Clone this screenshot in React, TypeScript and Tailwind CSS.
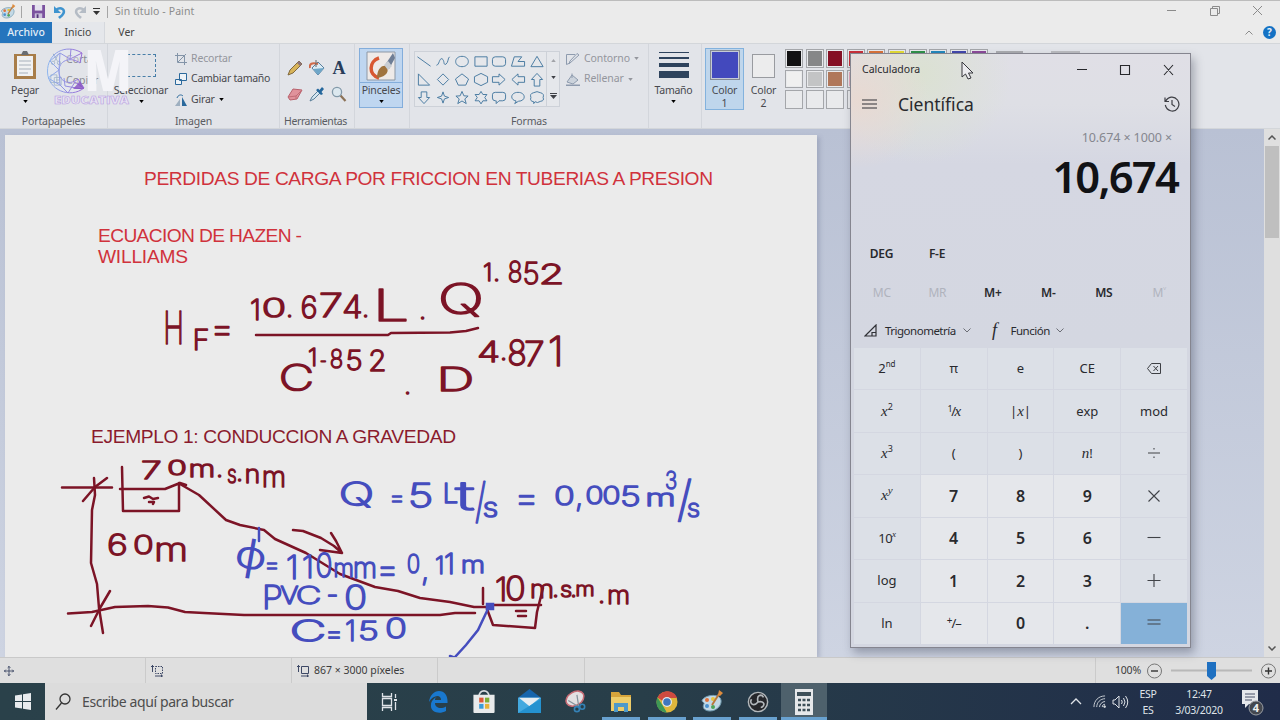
import type { ReactNode } from 'react';
import { clsx } from 'clsx';

const PALETTE = [
  ['#111113', '#868788', '#850f24', '#c8303a', '#d9733a', '#e3dc35', '#2f9149', '#2388bd', '#4247ac', '#8b4a99'],
  ['#f0f0f0', '#c3c4c5', '#b0775a', '#e3a9bb', '#eac147', '#e6dfae', '#b0d548', '#98cfdf', '#6d8fb6', '#bcb4d6'],
  ['', '', '', '', '', '', '', '', '', ''],
];

const SHAPES = [
  'M1 3 L15 13',
  'M1 12 C4 12 4 4 7 5 C10 7 8 12 11 11 C14 9 13 4 15 3',
  'M8 2.5 C17 2.5 17 13.5 8 13.5 C-1 13.5 -1 2.5 8 2.5Z',
  'M1.5 3 H14.5 V13 H1.5Z',
  'M4 3 H12 Q15 3 15 6 V10 Q15 13 12 13 H4 Q1 13 1 10 V6 Q1 3 4 3Z',
  'M1 13 L4 3 H12 L8 8 H15 V13Z',
  'M8 2.5 L14.5 13.5 H1.5Z',
  'M2 2 V14 H14Z',
  'M8 2 L14 8 L8 14 L2 8Z',
  'M8 2 L15 7.5 L12 14 H4 L1 7.5Z',
  'M8 1.5 L15 5 V11 L8 14.5 L1 11 V5Z',
  'M1 5 H8 V2 L14.5 8 L8 14 V11 H1Z',
  'M15 5 H8 V2 L1.5 8 L8 14 V11 H15Z',
  'M5 15 V8 H2 L8 1.5 L14 8 H11 V15Z',
  'M5 2 V8 H2 L8 14.5 L14 8 H11 V2Z',
  'M8 2 L9.5 6.5 L14 8 L9.5 9.5 L8 14 L6.5 9.5 L2 8 L6.5 6.5Z',
  'M8 1.5 L10 6.2 L14.5 6.5 L11 9.5 L12.5 14.5 L8 11.7 L3.5 14.5 L5 9.5 L1.5 6.5 L6 6.2Z',
  'M8 1.5 L10 4.8 L14.3 4.8 L12 8 L14.3 11.5 L10 11.5 L8 14.8 L6 11.5 L1.7 11.5 L4 8 L1.7 4.8 L6 4.8Z',
  'M4 2.5 H12 Q15 2.5 15 5 V8.5 Q15 11.5 12 11.5 H8 L5 14.5 V11.5 H4 Q1 11.5 1 8.5 V5 Q1 2.5 4 2.5Z',
  'M6 11.7 C-1 10.5 0 2.5 8 2.5 C16.5 2.5 17 11.8 8.5 12 L4.5 14.5Z',
  'M4 3 Q8 0.5 12 3 Q16 4 14.5 8 Q16 11.5 12 12 Q8 14.5 6 12.5 L4.5 14.5 L4.5 12.5 Q0 12 1.5 8 Q0 4 4 3Z',
];

/** Character plus the box of its ink: left, top, right, bottom. */
type Mark = [string, number, number, number, number];

const RED_NOTES: Mark[][] = [
  [['H', 165, 311, 182, 344], ['F', 194, 329, 208, 350], ['=', 213, 323, 231, 333]],
  [
    ['1', 251, 299, 256, 320], ['0', 264, 298, 284, 317], ['.', 288, 312, 292, 317], ['6', 302, 296, 316, 318],
    ['7', 321, 293, 341, 317], ['4', 344, 295, 361, 318], ['.', 364, 312, 368, 317], ['L', 376, 289, 406, 321],
  ],
  [['.', 421, 313, 426, 319], ['Q', 442, 283, 480, 314]],
  [['1', 484, 263, 490, 281], ['.', 495, 277, 499, 281], ['8', 509, 261, 521, 282], ['5', 524, 262, 538, 284], ['2', 541, 264, 562, 284]],
  [['C', 282, 364, 311, 390]],
  [['1', 309, 348, 318, 366], ['-', 321, 360, 326, 363], ['8', 331, 349, 342, 368], ['5', 347, 350, 361, 370], ['2', 370, 350, 385, 371]],
  [['.', 406, 389, 410, 394], ['D', 440, 367, 471, 391]],
  [['4', 479, 341, 498, 362], ['.', 502, 355, 506, 360], ['8', 509, 340, 525, 365], ['7', 526, 341, 543, 366], ['1', 549, 336, 560, 366]],
  [
    ['7', 143, 461, 160, 479], ['0', 169, 460, 185, 475], ['m', 191, 464, 213, 477], ['.', 218, 473, 222, 477], ['s', 228, 469, 236, 483],
    ['.', 238, 477, 242, 481], ['n', 246, 469, 259, 483], ['m', 264, 471, 284, 487],
  ],
  [['6', 109, 534, 126, 555], ['0', 135, 535, 152, 554], ['m', 157, 543, 185, 561]],
  [
    ['1', 496, 577, 504, 601], ['0', 507, 576, 524, 600], ['m', 532, 584, 552, 598], ['.', 554, 593, 558, 597], ['s', 561, 585, 571, 597],
    ['.', 572, 594, 575, 597], ['m', 577, 585, 593, 596], ['.', 600, 599, 605, 603], ['m', 609, 590, 628, 604],
  ],
];

const BLUE_NOTES: Mark[][] = [
  [['Q', 342, 482, 371, 505], ['=', 391, 492, 403, 502], ['5', 410, 483, 431, 507]],
  [['L', 444, 483, 457, 503], ['t', 457, 481, 473, 510], ['/', 475, 478, 486, 522], ['s', 484, 502, 497, 517]],
  [['=', 517, 491, 536, 503]],
  [['0', 556, 486, 573, 505], [',', 576, 500, 579, 510], ['0', 587, 486, 602, 504], ['0', 604, 486, 619, 504], ['5', 622, 486, 639, 506]],
  [['m', 648, 493, 673, 506], ['3', 666, 471, 676, 489]],
  [['/', 677, 475, 692, 520], ['s', 688, 503, 699, 517]],
  [['=', 266, 561, 278, 568]],
  [['1', 287, 555, 299, 579], ['1', 303, 555, 310, 578], ['0', 317, 553, 331, 577], ['m', 335, 563, 352, 577], ['m', 355, 562, 375, 578], ['=', 379, 564, 396, 573]],
  [['0', 408, 554, 419, 573], [',', 422, 574, 426, 584], ['1', 436, 556, 441, 574], ['1', 445, 553, 451, 574], ['m', 463, 560, 483, 573]],
  [['P', 264, 585, 281, 609], ['V', 282, 586, 297, 604], ['C', 298, 586, 319, 604], ['-', 328, 594, 337, 597], ['0', 346, 585, 365, 609]],
  [['C', 293, 620, 323, 641], ['=', 327, 628, 341, 637], ['1', 346, 620, 352, 641], ['5', 360, 621, 377, 640], ['0', 387, 618, 405, 638]],
];

const X_HEIGHT = 0.55;
const CAP_HEIGHT = 0.73;

/** Turns an ink box into the attributes that stretch the glyph over it. */
function fitMark([ch, left, top, right, bottom]: Mark) {
  const w = right - left;
  const h = bottom - top;
  if (ch === '.') return { x: left - 2, y: bottom, fontSize: 26 };
  if (ch === ',') return { x: left - 1, y: bottom - 4, fontSize: 30 };
  if (ch === '=') {
    const size = w / 0.5;
    return { x: left - size * 0.07, y: (top + bottom) / 2 + size * 0.36, fontSize: size };
  }
  if (ch === '-') {
    const size = w / 0.34;
    return { x: left - size * 0.06, y: (top + bottom) / 2 + size * 0.33, fontSize: size };
  }
  if (ch === '1') return { x: left - 1, y: bottom, fontSize: h / CAP_HEIGHT };
  if (ch === '/') return { x: left, y: bottom - h * 0.1, fontSize: h / 0.92, textLength: w };
  const lower = ch === 'm' || ch === 'n' || ch === 's';
  const length = w / 0.82;
  return {
    x: left - length * 0.09,
    y: bottom,
    fontSize: h / (lower ? X_HEIGHT : CAP_HEIGHT),
    textLength: length,
  };
}

function Notes({ notes, color }: { notes: Mark[][]; color: string }) {
  return (
    <g fill={color} stroke={color} strokeWidth="1.500" strokeLinejoin="round" fontWeight="200">
      {notes.map((word, i) => (
        <text key={i}>
          {word.map((mark, j) => (
            <tspan key={j} lengthAdjust="spacingAndGlyphs" {...fitMark(mark)}>
              {mark[0]}
            </tspan>
          ))}
        </text>
      ))}
    </g>
  );
}

function Canvas() {
  return (
    <svg viewBox="5 135 812 522" className="block h-[522px] w-[812px]" fontFamily="'Liberation Sans', Arial, sans-serif">
      <g fill="#d0323c" fontSize="19.2">
        <text x="144" y="185" textLength="569" lengthAdjust="spacing">PERDIDAS DE CARGA POR FRICCION EN TUBERIAS A PRESION</text>
        <text x="98" y="242" textLength="204" lengthAdjust="spacing">ECUACION DE HAZEN -</text>
        <text x="98" y="263" textLength="90" lengthAdjust="spacing">WILLIAMS</text>
      </g>
      <text x="91" y="443" fontSize="19.2" fill="#8a1b2d" textLength="365" lengthAdjust="spacing">EJEMPLO 1: CONDUCCION A GRAVEDAD</text>

      {/* fraction bar, tanks, pipe and dimension lines */}
      <g fill="none" stroke="#7c1426" strokeWidth="2.5" strokeLinecap="round" strokeLinejoin="round">
        <path d="M256 335 H388 L391 333 L450 332.5 L466 331 L478 328" />
        <path d="M62 487.5 H112 M94 478 L95 495 L92 510 L91 563 L97 584 L99 608 L103 633" />
        <path d="M83 501 L95 487 L107 478 M91 626 L100 608 L110 591" />
        <path d="M68 613.5 L92 612 L115 607 L148 606 L168 607.5 L185 612 L204 613 L244 615 H440 L455 613 H475" />
        <path d="M122 467 L123 511 H179 V483 M120 489 H165 L180 483 L186 485" />
        <path d="M144 498 L149 496.500 L153 499 L158 498 M149 502 L154 502 L153 504" />
        <path d="M180 484 L199 495 L226 520 L240 525 L264 530 L275 539 L306 553 L340 574 L375 587 L398 591 L420 598 L450 602 L474 607 H488" />
        <path d="M293 530 L303 531 L321 538 L334 546 L342 553 M331 533 L336 541 L342 553 L320 550" />
        <path d="M483 588 V604 M492 605 H541 M487 609 L493 625 L535 628 L537 612 L543 588 M516 611 H526 M518 616 H526" />
      </g>
      <g fill="none" stroke="#454dbe" strokeWidth="2.5" strokeLinecap="round">
        <path d="M259 528 V541 M487 611 L478 630 L466 645 L455 657 M450 656 L453 657" />
        <rect x="487" y="604" width="6" height="5" fill="#454dbe" />
      </g>

      <g fontFamily="Inter, 'Noto Sans', sans-serif">
        <Notes notes={RED_NOTES} color="#7c1426" />
        <Notes notes={BLUE_NOTES} color="#454dbe" />
      </g>
      <text x="235" y="569" fontSize="40" fill="#454dbe" textLength="32" lengthAdjust="spacingAndGlyphs" transform="rotate(10 251 556)" fontFamily="'Noto Sans', 'DejaVu Sans', sans-serif">ϕ</text>
    </svg>
  );
}

function Caret({ className }: { className?: string }) {
  return (
    <svg viewBox="0 0 6 4" className={clsx('h-[3px] w-[5px] shrink-0', className)} fill="currentColor">
      <path d="M0 0H6L3 4Z" />
    </svg>
  );
}

function Group({ label, className, children }: { label?: string; className: string; children?: ReactNode }) {
  return (
    <div className={clsx('flex shrink-0 flex-col border-r border-[#d3d6dc] pt-1', className)}>
      <div className="flex h-[67px]">{children}</div>
      <div className="text-center text-[10.5px] leading-[13px] tracking-[-0.150px] text-[#5a5c62]">{label}</div>
    </div>
  );
}

function PaintIcon({ className }: { className?: string }) {
  return (
    <svg viewBox="0 0 24 24" className={className}>
      <path d="M3 9C8 4 20 4 21 10C22 15 17 21 10 21C4 21 2 17 4 14C5 12 0 12 3 9Z" fill="#c3d9e6" stroke="#6f98ad" />
      <circle cx="7" cy="10" r="2" fill="#e0713a" />
      <circle cx="13" cy="9" r="2" fill="#e6c33f" />
      <circle cx="7" cy="16" r="2" fill="#4b92cf" />
      <circle cx="13" cy="17" r="2" fill="#4fa55a" />
      <path d="M12 15L19 4" stroke="#b9793d" strokeWidth="2" />
      <path d="M18 5L19 0L23 3L20 6Z" fill="#dd8b3d" />
    </svg>
  );
}

function TitleBar() {
  return (
    <header className="flex h-[22px] shrink-0 items-center border-t border-[#bcbcbc] bg-[#ebebeb]">
      <PaintIcon className="h-4 w-4" />
      <span className="ml-[5px] h-3 w-px bg-[#a5a5a5]" />
      <svg viewBox="0 0 14 14" className="ml-[10px] h-[13px] w-[13px]">
        <path d="M0 0H14V14H0Z" fill="#7b529f" />
        <path d="M3 0H11V6H3Z" fill="#e4e1ee" />
        <path d="M3 9H11V14H3Z" fill="#c9bfdb" />
        <path d="M5 10H7V14H5Z" fill="#54357a" />
      </svg>
      <svg viewBox="0 0 14 14" className="ml-2 h-[14px] w-[14px]">
        <path d="M3 5C8 1 13 5 10 9C9 11 7 12 6 13" fill="none" stroke="#3f94cf" strokeWidth="2.600" />
        <path d="M1 1V8H8Z" fill="#3f94cf" />
      </svg>
      <svg viewBox="0 0 14 14" className="ml-[6px] h-[14px] w-[14px]">
        <path d="M11 5C6 1 1 5 4 9C5 11 7 12 8 13" fill="none" stroke="#b5bcc5" strokeWidth="2.600" />
        <path d="M13 1V8H6Z" fill="#b5bcc5" />
      </svg>
      <svg viewBox="0 0 7 7" className="ml-[6px] h-[7px] w-[7px]" fill="#333">
        <path d="M0 0H7V1H0ZM0 3H7L3.500 7Z" />
      </svg>
      <span className="ml-[7px] h-3 w-px bg-[#a5a5a5]" />
      <span className="ml-[7px] text-[10.5px] tracking-[0.1px] text-[#8c8c8c]">Sin título - Paint</span>
      <svg viewBox="0 0 96 12" className="mr-[17px] ml-auto h-3 w-[96px]" fill="none" stroke="#8b8b8b">
        <path d="M0 4.500H9 M43.500 2.500H50.500V9.500H43.500ZM45.500 2V0.500H52.500V7.500H51 M86 0L95 9M95 0L86 9" />
      </svg>
    </header>
  );
}

function TabRow() {
  return (
    <nav className="flex h-[21px] shrink-0 items-center bg-[#ebebeb] text-[10.5px] text-[#444]">
      <span className="flex h-full w-[52px] items-center justify-center bg-[#2575bd] font-medium text-[#e3edf6]">Archivo</span>
      <span className="flex h-full w-[53px] items-center justify-center border-r border-[#d5d8dd] bg-[#e5e7eb]">Inicio</span>
      <span className="flex w-[43px] items-center justify-center">Ver</span>
      <svg viewBox="0 0 8 5" className="mr-[10px] ml-auto h-[5px] w-2" fill="none" stroke="#8b8b8b">
        <path d="M0.500 4.500L4 1L7.500 4.500" />
      </svg>
      <span className="mr-[4px] flex h-[13px] w-[13px] items-center justify-center rounded-full bg-[#1572c4] text-[10px] font-bold text-[#e8f0f8]">?</span>
    </nav>
  );
}

function Tools() {
  return (
    <div className="mt-[7px] ml-[4px] grid h-[52px] w-[66px] grid-cols-3 grid-rows-2 place-items-center">
      <svg viewBox="0 0 16 16" className="h-4 w-4">
        <path d="M1 15L3 10L12 1L15 4L6 13Z" fill="#d8b45a" stroke="#80683e" />
        <path d="M12 1L15 4L13 6L10 3Z" fill="#8d747a" />
      </svg>
      <svg viewBox="0 0 16 16" className="h-4 w-4">
        <path d="M3 8L9 2L15 8L9 15Z" fill="#dcebf4" stroke="#587f9d" />
        <path d="M4 9L15 8L9 15Z" fill="#6ea6c8" />
        <path d="M1 8C0 4 3 2 9 4" fill="none" stroke="#d06a49" strokeWidth="2" />
        <path d="M7 0V7" stroke="#666" />
      </svg>
      <span className="font-['Liberation_Serif',serif] text-[18px] leading-4 font-bold text-[#283d5a]">A</span>
      <svg viewBox="0 0 16 16" className="h-4 w-4">
        <path d="M1 11L6 3L15 4L10 13L3 14Z" fill="#e0929b" stroke="#b8616c" />
        <path d="M1 11L9 10L15 4M9 10V13" fill="none" stroke="#c16c76" />
      </svg>
      <svg viewBox="0 0 16 16" className="h-4 w-4">
        <path d="M1 15L3 11L9 5L11 7L5 13Z" fill="#d5e6f0" stroke="#5a7e99" />
        <path d="M7 4L9 2.500L10.500 4L13 1L15 3L12.500 6L14 8L12 9Z" fill="#25679c" />
      </svg>
      <svg viewBox="0 0 16 16" className="h-4 w-4">
        <path d="M9.500 9.500L14.500 15" stroke="#8c7257" strokeWidth="2.200" />
        <circle cx="6" cy="6" r="4.600" fill="#dce8ef" stroke="#8299a9" strokeWidth="1.300" />
      </svg>
    </div>
  );
}

function Ribbon() {
  return (
    <section className="flex h-[86px] shrink-0 overflow-hidden border-y border-[#d3d6da] bg-[#e2e4e9] text-[10.5px] text-[#48494e]">
      <Group label="Portapapeles" className="w-[108px]">
        <div className="flex w-[50px] flex-col items-center pt-[3px]">
          <svg viewBox="0 0 24 28" className="h-[28px] w-[24px]">
            <path d="M1 3H23V28H1Z" fill="#a87d49" />
            <path d="M4 5H20V25H4Z" fill="#f0f1f2" />
            <path d="M8 4L10 0H14L16 4Z" fill="#696d72" />
            <path d="M6 10H18M6 14H18M6 18H18M6 22H15" stroke="#a7b0bb" />
          </svg>
          <span className="mt-[5px] leading-[13px] tracking-[-0.200px]">Pegar</span>
          <Caret className="mt-[3px] text-black" />
        </div>
        <div className="flex flex-col gap-[5px] pt-[3px] text-[#898b93]">
          <span className="flex items-center gap-1 leading-4">
            <svg viewBox="0 0 14 14" className="h-3 w-3" fill="none" stroke="#7593ad">
              <path d="M4 1L9 10M10 1L5 10" />
              <circle cx="3.500" cy="11.500" r="2" />
              <circle cx="10.500" cy="11.500" r="2" />
            </svg>
            Cortar
          </span>
          <span className="flex items-center gap-1 leading-4">
            <svg viewBox="0 0 14 14" className="h-3 w-3" fill="#e5e8ed" stroke="#7593ad">
              <path d="M1 1H8V10H1ZM5 4H13V13H5ZM7 7H11M7 10H11" />
            </svg>
            Copiar
          </span>
        </div>
      </Group>

      <Group label="Imagen" className="w-[172px]">
        <div className="flex w-[66px] flex-col items-center pt-[6px]">
          <span className="h-[23px] w-[29px] border border-dashed border-[#477ea8]" />
          <span className="mt-[7px] leading-[13px] tracking-[-0.150px]">Seleccionar</span>
          <Caret className="mt-[3px] text-black" />
        </div>
        <div className="flex flex-col pl-[1px]">
          <span className="flex h-[21px] items-center gap-[4px] tracking-[-0.150px] text-[#94969d]">
            <svg viewBox="0 0 12 12" className="h-3 w-3" fill="none" stroke="#8394a8">
              <path d="M2.500 0V9.500H12M0 2.500H9.500V12M3 9L11 1" />
            </svg>
            Recortar
          </span>
          <span className="flex h-[20px] items-center gap-[4px] tracking-[-0.250px]">
            <svg viewBox="0 0 12 12" className="h-3 w-3" fill="#edf2f7" stroke="#2b699c">
              <path d="M4.500 0.500H11.500V7.500H4.500ZM0.500 6.500H6.500V11.500H0.500Z" />
            </svg>
            Cambiar tamaño
          </span>
          <span className="flex h-[21px] items-center gap-[4px] tracking-[-0.200px]">
            <svg viewBox="0 0 12 12" className="h-3 w-3">
              <path d="M5 5V12H0Z" fill="#9eafc0" />
              <path d="M7 3V12H12Z" fill="#2b699c" />
              <path d="M2 4C3 1 6 0 8 2" fill="none" stroke="#2b699c" />
            </svg>
            Girar
            <Caret className="text-black" />
          </span>
        </div>
      </Group>

      <div className="flex w-[75px] shrink-0 flex-col border-r border-[#d3d6dc] pt-1">
        <div className="flex h-[67px]">
          <Tools />
        </div>
        <div className="mr-[3px] text-center text-[10.5px] leading-[13px] tracking-[-0.400px] text-[#5a5c62]">Herramientas</div>
      </div>

      <Group className="w-[55px]">
        <div className="ml-[4px] flex h-[60px] w-[44px] flex-col items-center border border-[#83addb] bg-[#bfd6f0]">
          <div className="flex h-[34px] w-full items-center justify-center border-b border-[#83addb]">
            <svg viewBox="0 0 30 30" className="h-[30px] w-[30px]">
              <path d="M1 1H29V29H1Z" fill="#eeeae8" stroke="#8d98a5" />
              <path d="M13 7C3 10 2 24 13 27" fill="none" stroke="#d85832" strokeWidth="3.500" />
              <path d="M11 27C11 19 15 14 20 15C24 19 21 26 11 27Z" fill="#a0743e" />
              <path d="M19 14L27 2L29 7L23 18Z" fill="#6e7e96" />
              <path d="M18 14L22 10L26 15L22 19Z" fill="#c8cdd3" />
            </svg>
          </div>
          <span className="mt-px leading-[13px] tracking-[-0.200px]">Pinceles</span>
          <Caret className="mt-[3px] text-black" />
        </div>
      </Group>

      <Group label="Formas" className="w-[239px]">
        <div className="mt-[3px] ml-[4px] flex h-[56px] w-[146px] border border-[#cdd1d8] bg-[#e5e7eb]">
          <div className="grid w-[132px] grid-cols-7 grid-rows-3 place-items-center">
            {SHAPES.map((d) => (
              <svg key={d} viewBox="0 0 16 16" className="h-[15px] w-[16px]" fill="none" stroke="#44789f">
                <path d={d} />
              </svg>
            ))}
          </div>
          <div className="flex w-[13px] flex-col items-center justify-around border-l border-[#cdd1d8] text-[#3f4147]">
            <Caret className="rotate-180 text-[#a1a3a8]" />
            <Caret />
            <svg viewBox="0 0 7 6" className="h-[6px] w-[7px]" fill="currentColor">
              <path d="M0 0H7V1H0ZM0 2H7L3.500 6Z" />
            </svg>
          </div>
        </div>
        <div className="ml-[6px] flex flex-col text-[#94969d]">
          <span className="flex h-[21px] items-center gap-[4px] tracking-[-0.100px]">
            <svg viewBox="0 0 14 12" className="h-3 w-[14px]" fill="none" stroke="#8e9bae">
              <path d="M9 1.500H0.500V11.500L4 10L13 2L11 0.500L4 8L3 11" />
            </svg>
            Contorno
            <Caret />
          </span>
          <span className="flex h-[20px] items-center gap-[4px] tracking-[-0.100px]">
            <svg viewBox="0 0 14 13" className="h-[13px] w-[14px]" fill="#ccd3dc" stroke="#8e9bae">
              <path d="M1 9L6 2L12 7L7 11ZM6 5V0.500" />
              <path d="M0 12.500H14" strokeWidth="2" />
            </svg>
            Rellenar
            <Caret />
          </span>
        </div>
      </Group>

      <Group className="w-[53px]">
        <div className="flex w-[49px] flex-col items-center pt-[3px]">
          <svg viewBox="0 0 30 28" className="h-[28px] w-[30px]" fill="#2e435d">
            <path d="M0 1H30V2H0ZM0 6H30V8H0ZM0 12H30V16H0ZM0 20H30V27H0Z" />
          </svg>
          <span className="mt-[5px] leading-[13px] tracking-[-0.250px]">Tamaño</span>
          <Caret className="mt-[3px] text-black" />
        </div>
      </Group>

      <div className="flex pt-1 pl-[3px] tracking-[-0.200px]">
        <div className="flex h-[62px] w-[39px] flex-col items-center border border-[#83b2dd] bg-[#bfd6ec] pt-[1px]">
          <span className="flex h-[30px] w-[30px] border border-[#848a94] bg-[#c5cad7] p-px">
            <span className="flex-1 bg-[#4349bd]" />
          </span>
          <span className="mt-[4px] leading-[13px]">Color</span>
          <span className="leading-[12px]">1</span>
        </div>
        <div className="flex w-[39px] flex-col items-center pt-[6px]">
          <span className="h-[24px] w-[23px] border border-[#999ba0] bg-[#ececed]" />
          <span className="mt-[6px] leading-[13px]">Color</span>
          <span className="leading-[12px]">2</span>
        </div>
        <div className="ml-[2px] flex flex-col gap-[2px] pt-px">
          {PALETTE.map((row, r) => (
            <div key={r} className="flex gap-[2.600px]">
              {row.map((color, c) => (
                <span key={c} className="flex h-[18.600px] w-[18px] border border-[#a4a6aa] bg-[#e9eaec] p-px">
                  <span className="flex-1" style={{ backgroundColor: color }} />
                </span>
              ))}
            </div>
          ))}
        </div>
        <span className="mt-[3px] ml-[8px] h-6 w-[27px] border-t-2 border-[#aaabaf]" />
        <span className="mt-[3px] ml-[28px] h-6 w-[29px] border-t-2 border-[#bbbcc0]" />
      </div>
    </section>
  );
}

function StatusBar() {
  return (
    <footer className="flex h-[26px] shrink-0 items-center border-t border-[#c9c9c9] bg-[#dfdfdf] text-[10.5px] text-[#3c3c3c]">
      <div className="flex h-full w-[146px] items-center border-r border-[#cbcbcb] pl-1">
        <svg viewBox="0 0 11 11" className="h-[10px] w-[10px]" fill="none" stroke="#3e4966">
          <path d="M5.500 0V11M0 5.500H11M4 2L5.500 0.500L7 2M4 9L5.500 10.500L7 9M2 4L0.500 5.500L2 7M9 4L10.500 5.500L9 7" />
        </svg>
      </div>
      <div className="flex h-full w-[146px] items-center border-r border-[#cbcbcb] pl-[5px]">
        <svg viewBox="0 0 13 12" className="h-3 w-[13px]" fill="none" stroke="#3e4966">
          <path d="M1.500 0V7M0 1.500H3M4 11H12M10.500 9.500V12" />
          <path d="M4.500 1.500H11.500V8.500H4.500Z" strokeDasharray="1.500 1" />
        </svg>
      </div>
      <div className="flex h-full w-[146px] items-center gap-1 border-r border-[#cbcbcb] pl-[5px]">
        <svg viewBox="0 0 13 12" className="h-3 w-[13px]" fill="none" stroke="#3e4966">
          <path d="M1.500 0V7M0 1.500H3M4 11H12M10.500 9.500V12M4.500 1.500H11.500V8.500H4.500Z" />
        </svg>
        <span className="whitespace-nowrap">867 × 3000 píxeles</span>
      </div>
      <div className="h-full w-[147px] border-r border-[#cbcbcb]" />
      <div className="ml-auto flex h-full items-center border-l border-[#cbcbcb] pl-[19px]">
        <span className="w-[27px] tracking-[-0.200px]">100%</span>
        <svg viewBox="0 0 132 20" className="mr-[2px] ml-[4px] h-5 w-[132px]" fill="none" stroke="#777">
          <path d="M25 9.500H106" stroke="#b8b8b8" strokeWidth="2" />
          <circle cx="8.500" cy="10" r="7" />
          <path d="M5 10H12" stroke="#333" strokeWidth="1.400" />
          <path d="M61 1H70V15L65.500 19L61 15Z" fill="#1e70c1" stroke="none" />
          <circle cx="122.500" cy="10" r="7" />
          <path d="M119 10H126M122.500 6.500V13.500" stroke="#333" strokeWidth="1.400" />
        </svg>
      </div>
    </footer>
  );
}

function TaskItem({ open, active, children }: { open?: boolean; active?: boolean; children: ReactNode }) {
  return (
    <span className={clsx('flex h-full w-[45.750px] shrink-0 flex-col items-center', active && 'bg-[#4e616c]')}>
      <span className="flex h-[34px] items-center justify-center pt-[3px]">{children}</span>
      {open && <span className={clsx('h-[3px] bg-[#68a1cf]', active ? 'w-full' : 'w-[38px]')} />}
    </span>
  );
}

function Taskbar() {
  return (
    <footer className="flex h-[37px] shrink-0 items-center bg-linear-to-r from-[#2a414a] via-[#283e49] to-[#202c49] text-[#dfe3e8]">
      <div className="flex w-[45px] items-center justify-center">
        <svg viewBox="0 0 16 17" className="h-[17px] w-4" fill="#e8ebee">
          <path d="M0 2.500L7 1.500V8H0ZM8 1.300L16 0V8H8ZM0 9H7V15.500L0 14.500ZM8 9H16V17L8 15.700Z" />
        </svg>
      </div>
      <div className="flex h-full w-[322px] items-center bg-[#dcdcdc]">
        <svg viewBox="0 0 16 18" className="ml-[10px] h-[18px] w-4" fill="none" stroke="#333" strokeWidth="1.300">
          <circle cx="10" cy="6" r="5" />
          <path d="M6.500 10L1 16.500" />
        </svg>
        <span className="ml-[11px] text-[14px] tracking-[-0.400px] text-[#4d4d4d]">Escribe aquí para buscar</span>
      </div>
      <div className="flex w-[48px] justify-center pt-px pr-1">
        <svg viewBox="0 0 16 18" className="h-[18px] w-4" fill="none" stroke="#dfe3e8" strokeWidth="1.300">
          <path d="M1.500 0V3.500H10.500V0M1.500 18V14.500H10.500V18M1.500 5.500H10.500V12.500H1.500ZM14.500 1V5M14.500 9V17" />
          <path d="M13 6H16V8H13Z" fill="#dfe3e8" stroke="none" />
        </svg>
      </div>
      <TaskItem>
        <svg viewBox="0 0 20 22" className="h-[22px] w-5">
          <path d="M1 11C2 4 6 0 11 0C17 0 20 5 19.500 12H7C7 17 13 18.500 18 15.500V20C11 24 2 21 3 14C3 10 6 7 9 6C7 7 7 8 7 9H13C13 3 5 4 1 11Z" fill="#1978ce" />
        </svg>
      </TaskItem>
      <TaskItem>
        <svg viewBox="0 0 22 26" className="h-[25px] w-[22px]">
          <path d="M6 8C5 0 17 0 16 8" fill="none" stroke="#d7dbdf" strokeWidth="1.700" />
          <path d="M0 6H22V24Q22 25 21 25H1Q0 25 0 24Z" fill="#e8eaeb" />
          <path d="M6 9H10.500V14H6Z" fill="#dc5737" />
          <path d="M12 9H16.500V14H12Z" fill="#7dac36" />
          <path d="M6 15.500H10.500V20.500H6Z" fill="#399bd7" />
          <path d="M12 15.500H16.500V20.500H12Z" fill="#e6b239" />
        </svg>
      </TaskItem>
      <TaskItem>
        <svg viewBox="0 0 24 26" className="h-[25px] w-[23px]">
          <path d="M0 9L12 0L24 9V13H0Z" fill="#1765ac" />
          <path d="M0 9H24V25H0Z" fill="#43a9df" />
          <path d="M1 9H23L12 18Z" fill="#e7edf1" />
          <path d="M0 25L24 10V25Z" fill="#2492d0" />
        </svg>
      </TaskItem>
      <TaskItem>
        <svg viewBox="0 0 22 24" className="h-[23px] w-[22px]">
          <ellipse cx="11" cy="9" rx="10" ry="7" transform="rotate(-30 11 9)" fill="#e3e0e2" stroke="#c66b75" strokeWidth="1.600" />
          <path d="M4 11L14 17M13 5L15 18" stroke="#85929c" strokeWidth="1.300" />
          <circle cx="13" cy="20" r="2.600" fill="none" stroke="#3582b6" strokeWidth="1.700" />
          <circle cx="18.500" cy="17.500" r="2.600" fill="none" stroke="#3582b6" strokeWidth="1.700" />
        </svg>
      </TaskItem>
      <TaskItem open>
        <svg viewBox="0 0 20 20" className="h-5 w-5">
          <path d="M0 0H8L10 3H20V19H0Z" fill="#d6a43b" />
          <path d="M0 5H20V19H0Z" fill="#edcc69" />
          <path d="M3 11H17V20H13V15H7V20H3Z" fill="#4d99c9" />
        </svg>
      </TaskItem>
      <TaskItem open>
        <svg viewBox="0 0 22 24" className="h-[24px] w-[22px]">
          <circle cx="11" cy="12" r="10.500" fill="#dfb63c" />
          <path d="M1.500 7.500C6 -1 18 -0.500 21 8H11V14Z" fill="#cf4a40" />
          <path d="M1.500 7.500L7 16L11 22.500C2 22 -1.500 14 1.500 7.500Z" fill="#3e9855" />
          <path d="M7 15H15L11 22.500Z" fill="#dfb63c" />
          <circle cx="11" cy="12" r="5" fill="#e6e9eb" />
          <circle cx="11" cy="12" r="3.800" fill="#4176bd" />
        </svg>
      </TaskItem>
      <TaskItem open>
        <PaintIcon className="h-6 w-6" />
      </TaskItem>
      <TaskItem open>
        <svg viewBox="0 0 24 24" className="h-[24px] w-[22px]">
          <circle cx="12" cy="12" r="10.500" fill="#25262a" stroke="#b2b7bb" strokeWidth="1.600" />
          <path d="M12 12C10 4 16 3 18 7M12 12C20 10 20 17 15 18M12 12C7 18 2 13 5 9" fill="none" stroke="#b2b7bb" strokeWidth="1.800" />
        </svg>
      </TaskItem>
      <TaskItem open active>
        <svg viewBox="0 0 18 26" className="h-[26px] w-[18px]">
          <path d="M0 0H18V26H0Z" fill="#e6e8ea" />
          <path d="M2 3H16V7H2Z" fill="#3e5059" />
          <path d="M3 11H15M3 16H15M3 21H15" stroke="#3e5059" strokeWidth="2.500" strokeDasharray="3 1.500" />
        </svg>
      </TaskItem>

      <div className="ml-auto flex items-center text-center text-[11.500px] leading-[16px]">
        <svg viewBox="0 0 12 7" className="h-[7px] w-3" fill="none" stroke="#dfe3e8" strokeWidth="1.300">
          <path d="M1 6L6 1L11 6" />
        </svg>
        <svg viewBox="0 0 14 14" className="ml-[11px] h-[13px] w-[13px]" fill="none" stroke="#cfd5da">
          <path d="M1 13C1 6 6 1 13 1M4 13C4 8 8 4 13 4M7 13C7 10 10 7 13 7M10 13C10 11 11 10 13 10" />
          <circle cx="12.500" cy="12.500" r="1" fill="#cfd5da" />
        </svg>
        <svg viewBox="0 0 17 16" className="ml-[6px] h-4 w-[17px]" fill="none" stroke="#dfe3e8">
          <path d="M1 6H3L7 2V14L3 10H1ZM9.500 6Q11 8 9.500 10M11.500 4Q14.500 8 11.500 12M13.500 2Q18 8 13.500 14" />
        </svg>
        <span className="ml-[8px] w-[22px] text-[10.500px] tracking-[-0.400px]">ESP<br />ES</span>
        <span className="ml-[13px] w-[54px] text-[10.500px] tracking-[-0.250px]">12:47<br />3/03/2020</span>
        <svg viewBox="0 0 24 28" className="mr-[15px] ml-[15px] h-[28px] w-[24px]">
          <path d="M1 2H17V16H8L4 20V16H1Z" fill="#e5e7eb" />
          <path d="M4 6H14M4 9H14M4 12H11" stroke="#485068" />
          <circle cx="15" cy="20" r="7" fill="#44484f" stroke="#999da4" />
          <text x="15" y="24" textAnchor="middle" fill="#f0f1f2" fontSize="11" fontWeight="700">4</text>
        </svg>
      </div>
    </footer>
  );
}

const X = () => <i className="font-['Liberation_Serif',serif] text-[15px]">x</i>;
const Sup = ({ children }: { children: ReactNode }) => (
  <sup className="top-[-6px] text-[9px] leading-none">{children}</sup>
);
const Op = ({ d }: { d: string }) => (
  <svg viewBox="0 0 14 14" className="h-[14px] w-[14px]" fill="none" stroke="#404247" strokeWidth="1.100">
    <path d={d} />
  </svg>
);

const KEYS: ReactNode[] = [
  <span>2<sup className="top-[-6px] text-[8px] leading-none">nd</sup></span>,
  'π',
  'e',
  'CE',
  <svg viewBox="0 0 14 11" className="h-[11px] w-[14px]" fill="none" stroke="#3d3f44">
    <path d="M4.500 0.500H13.500V10.500H4.500L0.500 5.500ZM6.500 3L11 8M11 3L6.500 8" />
  </svg>,
  <span><X /><Sup>2</Sup></span>,
  <span className="tracking-[-1.500px]"><sup className="top-[-4px] text-[9px]">1</sup>/<X /></span>,
  <span>|<X />|</span>,
  'exp',
  'mod',
  <span><X /><Sup>3</Sup></span>,
  '(',
  ')',
  <span><i className="font-['Liberation_Serif',serif] text-[15px]">n</i>!</span>,
  <Op d="M1 6H13M7 1V2.500M7 9.500V11" />,
  <span><X /><Sup><i className="font-['Liberation_Serif',serif] text-[11px]">y</i></Sup></span>,
  '7',
  '8',
  '9',
  <Op d="M1.500 1.500L12.500 12.500M12.500 1.500L1.500 12.500" />,
  <span className="tracking-[-0.600px]">10<Sup><i className="font-['Liberation_Serif',serif]">x</i></Sup></span>,
  '4',
  '5',
  '6',
  <Op d="M0.500 6.500H13.500" />,
  'log',
  '1',
  '2',
  '3',
  <Op d="M0.500 6.500H13.500M7 0V13" />,
  'ln',
  <span className="tracking-[-1px]"><sup className="top-[-4px] text-[10px]">+</sup>/–</span>,
  '0',
  '.',
  <Op d="M0.500 4H13.500M0.500 8H13.500" />,
];

const MEMORY = [
  { label: 'MC', off: true },
  { label: 'MR', off: true },
  { label: 'M+' },
  { label: 'M-' },
  { label: 'MS' },
  { label: 'M˅', off: true },
];

function Chevron() {
  return (
    <svg viewBox="0 0 8 5" className="h-[5px] w-2" fill="none" stroke="#6b6d75">
      <path d="M0.500 0.500L4 4L7.500 0.500" />
    </svg>
  );
}

function Calculator() {
  return (
    <aside className="absolute top-[53px] left-[850px] flex h-[595px] w-[341px] flex-col border border-[#85858f] bg-[radial-gradient(circle_at_8px_45px,#e8d9d2_0px,transparent_70px),radial-gradient(circle_at_70px_20px,#dbe1d2_0px,transparent_90px),linear-gradient(180deg,#e0dfe6_0px,#dedfe5_50px,#d5d7e2_110px,#d4d7e1_290px)] text-[#292a2e] shadow-[3px_5px_9px_rgba(40,45,65,0.35)]">
      <div className="flex h-[32px] shrink-0 items-center pr-px pl-[11px]">
        <span className="text-[10.500px]">Calculadora</span>
        <svg viewBox="0 0 98 12" className="mr-[15px] ml-auto h-3 w-[98px]" fill="none" stroke="#26272b" strokeWidth="1.100">
          <path d="M1 5.500H11M44.500 1.500H53.500V10.500H44.500ZM88 1L97 11M97 1L88 11" />
        </svg>
      </div>
      <div className="flex h-[36px] shrink-0 items-center pl-[11px]">
        <svg viewBox="0 0 15 10" className="h-[10px] w-[15px]" fill="none" stroke="#303136" strokeWidth="1.100">
          <path d="M0 1H15M0 5H15M0 9H15" />
        </svg>
        <span className="ml-[21px] text-[17.500px]">Científica</span>
        <svg viewBox="0 0 16 16" className="mr-[10px] ml-auto h-4 w-4" fill="none" stroke="#3e3f45" strokeWidth="1.200">
          <path d="M1.500 5.500C4 0.500 10 -0.500 13.500 4C17.500 10 12 16.500 6.500 14.800C4 14 2 12 1.300 9M1 1.500V5.500H5M8 4V8.500L11 10.500" />
        </svg>
      </div>
      <div className="flex h-[32px] shrink-0 items-center justify-end pr-[18px] text-[12.500px] tracking-[-0.100px] text-[#85878f]">
        10.674 × 1000 ×
      </div>
      <div className="flex h-[46px] shrink-0 items-center justify-end pr-[12px] text-[43.500px] leading-none font-semibold tracking-[-1.800px] text-[#111215]">
        10,674
      </div>
      <div className="mt-[35px] flex h-[38px] shrink-0 items-center pl-[3px] text-[12px] font-semibold tracking-[-0.300px]">
        <span className="w-[55px] text-center">DEG</span>
        <span className="w-[56px] text-center">F-E</span>
      </div>
      <div className="flex h-[40px] shrink-0 items-center px-[3px] text-[12px] font-semibold tracking-[-0.300px]">
        {MEMORY.map((m) => (
          <span key={m.label} className={clsx('flex-1 text-center', m.off && 'font-normal text-[#b0b3bd]')}>
            {m.label}
          </span>
        ))}
      </div>
      <div className="flex h-[35px] shrink-0 items-center pl-[13px] text-[11.500px] tracking-[-0.500px]">
        <svg viewBox="0 0 14 13" className="h-[13px] w-[14px]" fill="none" stroke="#303136" strokeWidth="1.200">
          <path d="M1 12L12 1V12ZM8 12V8.500H12" />
        </svg>
        <span className="mr-[7px] ml-[7px] w-[71px] whitespace-nowrap">Trigonometría</span>
        <Chevron />
        <i className="ml-[21px] font-['Liberation_Serif',serif] text-[18px]">f</i>
        <span className="mr-[7px] ml-[14px] w-[38px]">Función</span>
        <Chevron />
      </div>
      <div className="mx-[3px] mb-[3px] grid min-h-0 flex-1 grid-cols-5 grid-rows-7 gap-px">
        {KEYS.map((key, i) => {
          const row = Math.floor(i / 5);
          const col = i % 5;
          const pad = row >= 3 && col > 0 && col < 4;
          return (
            <div
              key={i}
              className={clsx(
                'flex items-center justify-center leading-none',
                pad ? 'bg-[#e5e7eb]' : i === 34 ? 'bg-[#85b1d8]' : 'bg-[#dce0e7]',
                pad && i !== 31 ? 'text-[16px] font-semibold' : 'text-[13px]',
              )}
            >
              {key}
            </div>
          );
        })}
      </div>
      {/* mouse pointer, resting on the window's title bar */}
      <svg viewBox="0 0 13 19" className="absolute top-[7px] left-[110px] h-[19px] w-[13px]">
        <path d="M1 1V16L4.500 13L7 18L10 17L7.500 12H12Z" fill="#ececef" stroke="#36373c" />
      </svg>
    </aside>
  );
}

function Watermark() {
  return (
    <svg viewBox="0 0 84 60" className="absolute top-[47px] left-[46px] h-[60px] w-[84px]">
      <defs>
        <linearGradient id="wm" x1="0" x2="1">
          <stop offset="0" stopColor="#8eb5ed" />
          <stop offset="1" stopColor="#9969d5" />
        </linearGradient>
      </defs>
      <g fill="none" stroke="url(#wm)" strokeWidth="1">
        <path d="M36 6C20 -4 1 6 1.500 25C2 43 24 52 38 41L32 32C22 40 12 33 13 23C14 12 26 10 34 16Z" fill="#e9eaf5" fillOpacity="0.4" />
        <path d="M4 14L14 6L24 12L36 6M4 14L13 23L2 31L14 38L22 46L29 35L38 41M14 6L13 23M24 12L25 2M14 38L13 23M18 31L19 39L36 42" />
      </g>
      <path d="M27 42L34 34L38 42Z" fill="#8550c3" opacity="0.8" />
      <g fontFamily="'Open Sans', sans-serif" fontWeight="800">
        <text x="38" y="44" fontSize="56" textLength="48" lengthAdjust="spacingAndGlyphs" fill="#f4f4f8">M</text>
        <text x="8" y="57" fontSize="11" textLength="75" lengthAdjust="spacingAndGlyphs" fill="#e7e3f3" stroke="#b79be0" strokeWidth="0.500">EDUCATIVA</text>
      </g>
    </svg>
  );
}

export default function App() {
  return (
    <div className="relative flex h-[720px] w-[1280px] flex-col overflow-hidden font-['Noto_Sans','Open_Sans',sans-serif]">
      <TitleBar />
      <TabRow />
      <Ribbon />
      <main className="flex min-h-0 flex-1 bg-linear-to-b from-[#b9c1d4] to-[#ced4e2]">
        <div className="mt-[6px] ml-[5px] h-[522px] w-[812px] shrink-0 bg-[#ebebeb] shadow-[3px_2px_4px_rgba(90,100,130,0.25)]">
          <Canvas />
        </div>
        <div className="ml-auto flex w-4 flex-col items-center bg-[#dfdfdf] text-[#555]">
          <svg viewBox="0 0 8 5" className="my-[6px] h-[5px] w-2 shrink-0" fill="none" stroke="currentColor" strokeWidth="1.500">
            <path d="M0.500 4.500L4 1L7.500 4.500" />
          </svg>
          <span className="h-[92px] w-[14px] bg-[#bfbfbf]" />
          <svg viewBox="0 0 8 5" className="mt-auto mb-[6px] h-[5px] w-2 shrink-0" fill="none" stroke="currentColor" strokeWidth="1.500">
            <path d="M0.500 0.500L4 4L7.500 0.500" />
          </svg>
        </div>
      </main>
      <StatusBar />
      <Taskbar />
      <Watermark />
      <Calculator />
    </div>
  );
}
